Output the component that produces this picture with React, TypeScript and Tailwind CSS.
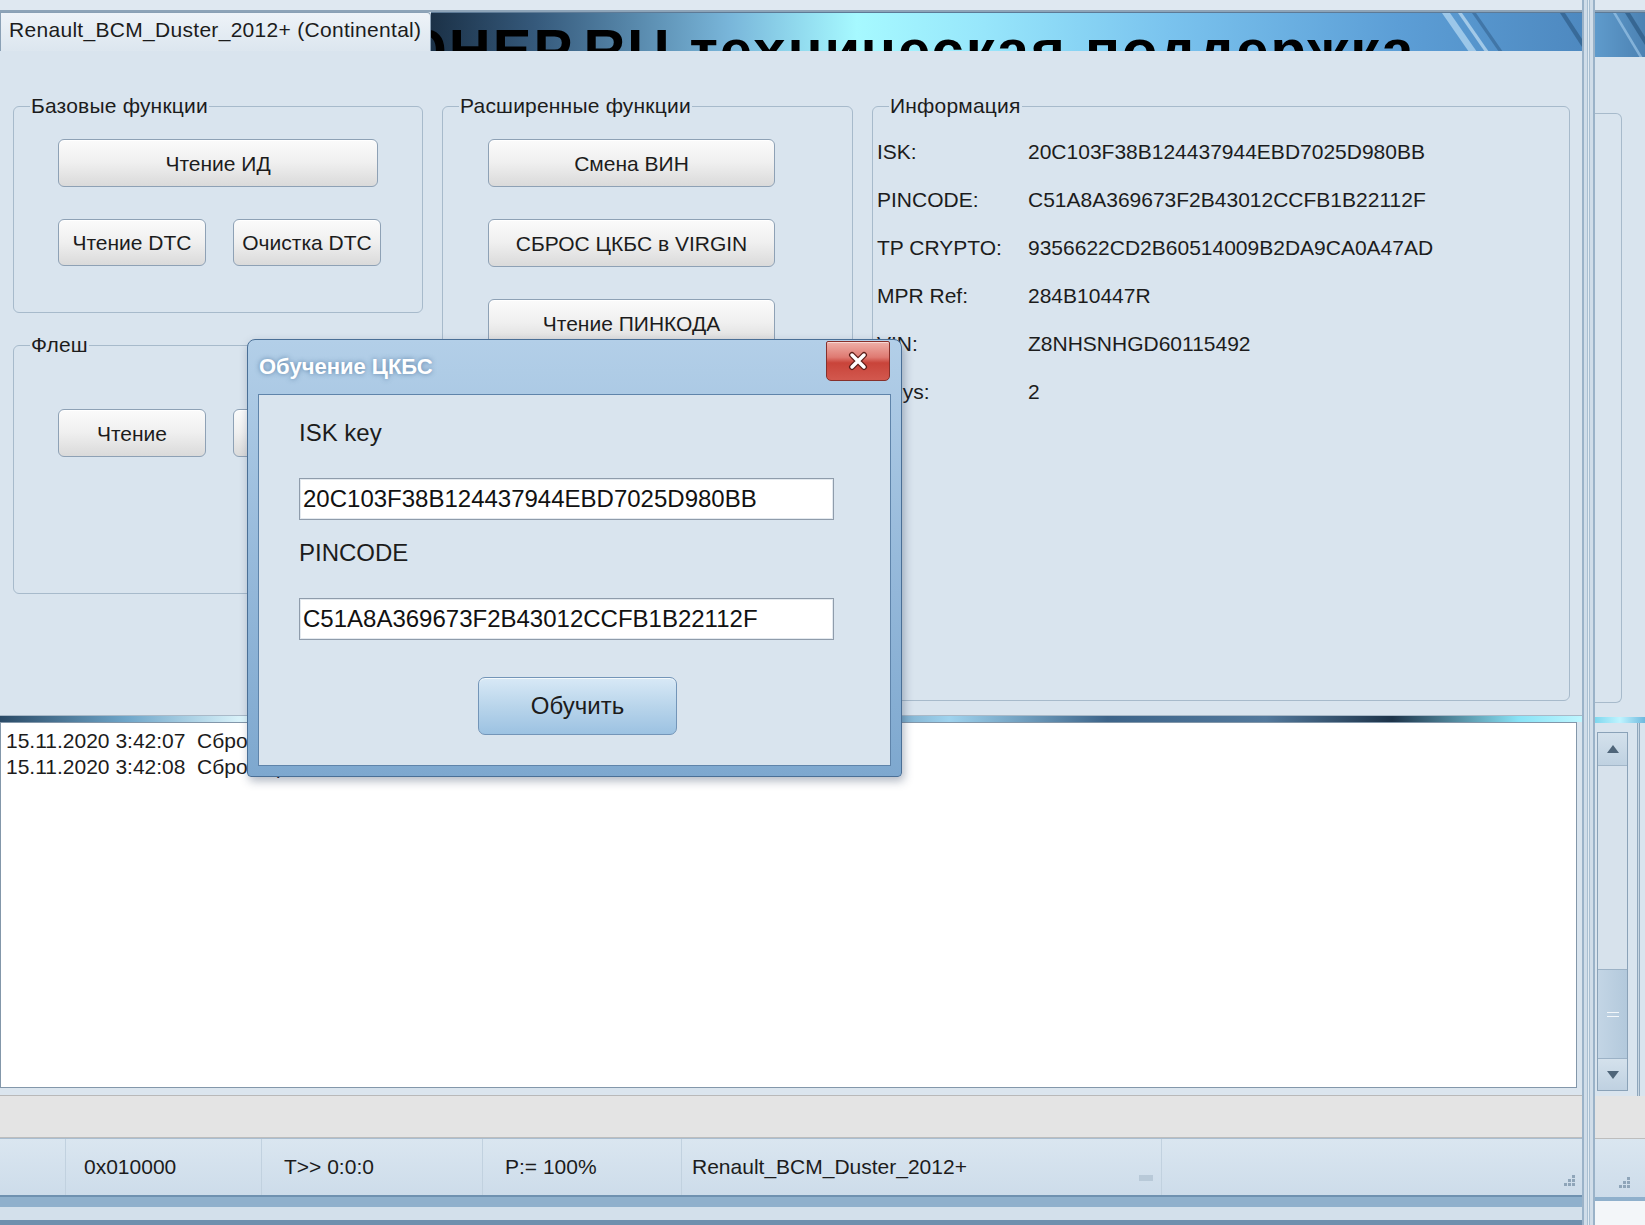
import React from 'react';

const INFO: [string, string][] = [
  ['ISK:', '20C103F38B124437944EBD7025D980BB'],
  ['PINCODE:', 'C51A8A369673F2B43012CCFB1B22112F'],
  ['TP CRYPTO:', '9356622CD2B60514009B2DA9CA0A47AD'],
  ['MPR Ref:', '284B10447R'],
  ['VIN:', 'Z8NHSNHGD60115492'],
  ['Keys:', '2'],
];

const LOG = ['15.11.2020 3:42:07  Сброс ЦКБС в VIRGIN', '15.11.2020 3:42:08  Сброс ЦКБС выполнен'];

function WinButton({ className = '', children }: { className?: string; children?: React.ReactNode }) {
  return (
    <button
      type="button"
      className={`flex shrink-0 items-center justify-center rounded-[6px] border border-[#8ea1b5] bg-linear-to-b from-[#fbfbfb] via-[#efefef] to-[#dadada] text-[21px] leading-none text-[#1c1c1c] shadow-[inset_0_1px_0_#ffffff] ${className}`}
    >
      {children}
    </button>
  );
}

function Group({ title, className = '', children }: { title: string; className?: string; children: React.ReactNode }) {
  return (
    <fieldset className={`min-w-0 shrink-0 rounded-[6px] border border-[#a7bacb] ${className}`}>
      <legend className="ml-[16px] px-px text-[21px] leading-[24px] tracking-[0.2px] text-[#1c1c1c]">{title}</legend>
      {children}
    </fieldset>
  );
}

function Grip() {
  return (
    <svg width="12" height="12" viewBox="0 0 12 12">
      {[
        [8, 0],
        [4, 4],
        [8, 4],
        [0, 8],
        [4, 8],
        [8, 8],
      ].map(([x, y]) => (
        <rect key={`${x}-${y}`} x={x} y={y} width="3" height="3" fill="#8fa5b9" />
      ))}
    </svg>
  );
}

function Banner() {
  return (
    <div className="relative h-[39px] flex-1 overflow-hidden border-t border-[#5d7a96] bg-[linear-gradient(90deg,#1b3147_0%,#35597b_9%,#79b6da_26%,#a6f9ff_37%,#97e6fb_48%,#7ac3ee_64%,#5c9ed6_84%,#4e89c0_100%)]">
      <div className="ml-[-44px] mt-[8px] whitespace-nowrap text-[58px] font-bold leading-[58px] tracking-[2px] text-black">
        ЮНЕР.RU техническая поддержка
      </div>
      {/* diagonal light stripes near the right end */}
      <svg className="absolute right-0 top-0" width="150" height="39" viewBox="0 0 150 39">
        <polygon points="10,0 18,0 45,39 37,39" fill="#b9dcf3" opacity="0.7" />
        <polygon points="26,0 30,0 57,39 53,39" fill="#d6ecfa" opacity="0.6" />
        <polygon points="40,0 44,0 71,39 67,39" fill="#34628f" opacity="0.6" />
        <polygon points="128,0 133,0 150,26 150,34" fill="#2f5d88" opacity="0.7" />
      </svg>
    </div>
  );
}

function Dialog() {
  return (
    <div className="absolute left-[247px] top-[339px] flex h-[438px] w-[655px] flex-col rounded-t-[8px] rounded-b-[4px] border border-[#4a6f96] bg-linear-to-b from-[#b3cfe8] via-[#97badb] to-[#7ea8cf] px-[10px] pb-[10px] shadow-[2px_4px_10px_rgba(30,50,80,0.35)]">
      <div className="flex h-[54px] shrink-0 items-start justify-between">
        <span className="ml-px mt-[14px] text-[22px] font-bold leading-[26px] text-white [text-shadow:0_0_5px_rgba(70,110,150,0.8)]">
          Обучение ЦКБС
        </span>
        <div className="mr-px mt-px flex h-[40px] w-[64px] items-center justify-center rounded-b-[5px] rounded-t-[2px] border border-[#86302b] bg-[linear-gradient(180deg,#eeb0a8_0%,#df7a72_40%,#c9443a_55%,#d2584e_100%)] shadow-[inset_0_1px_0_rgba(255,255,255,0.5)]">
          <svg width="24" height="20" viewBox="0 0 24 20">
            <path d="M6 4 L18 16 M18 4 L6 16" stroke="#5c1d18" strokeWidth="6" strokeLinecap="round" />
            <path d="M6 4 L18 16 M18 4 L6 16" stroke="#ffffff" strokeWidth="3.5" strokeLinecap="round" />
          </svg>
        </div>
      </div>
      <div className="flex flex-1 flex-col border border-[#5f84aa] bg-[#d9e4ee] pl-[40px] text-[24px] text-[#1c1c1c]">
        <div className="mt-[24px] leading-[28px]">ISK key</div>
        <input
          readOnly
          value="20C103F38B124437944EBD7025D980BB"
          className="mt-[31px] h-[42px] w-[535px] border border-[#8f9cab] bg-white px-[3px] text-[24px] text-[#111] outline-none shadow-[inset_0_0_0_1px_#e3e9ef]"
        />
        <div className="mt-[19px] leading-[28px]">PINCODE</div>
        <input
          readOnly
          value="C51A8A369673F2B43012CCFB1B22112F"
          className="mt-[31px] h-[42px] w-[535px] border border-[#8f9cab] bg-white px-[3px] text-[24px] text-[#111] outline-none shadow-[inset_0_0_0_1px_#e3e9ef]"
        />
        <button
          type="button"
          className="ml-[179px] mt-[37px] h-[58px] w-[199px] rounded-[7px] border border-[#7395b8] bg-linear-to-b from-[#d8e9f6] via-[#b9d5eb] to-[#9cc2e2] text-[24px] text-[#1c1c1c] shadow-[inset_0_1px_0_rgba(255,255,255,0.7)]"
        >
          Обучить
        </button>
      </div>
    </div>
  );
}

function SideWindow() {
  return (
    <div className="flex w-[50px] flex-col">
      <div className="h-[12px] shrink-0 border-b-2 border-[#8ea4b8] bg-[#dfe8f1]" />
      <div className="relative h-[45px] shrink-0 overflow-hidden border-t border-[#5d7a96] bg-[linear-gradient(90deg,#5f9bcc,#4c82b3)]">
        <svg className="absolute left-0 top-0" width="50" height="45" viewBox="0 0 50 45">
          <polygon points="30,0 35,0 50,24 50,32" fill="#2c5882" opacity="0.7" />
          <polygon points="18,0 21,0 48,45 45,45" fill="#a7cfee" opacity="0.6" />
        </svg>
      </div>
      <div className="h-[660px] shrink-0 bg-[#d9e4ee] pt-[56px]">
        <div className="h-[590px] w-[27px] rounded-r-[6px] border-y border-r border-[#a7bacb]" />
      </div>
      <div className="h-[6px] shrink-0 bg-[linear-gradient(90deg,#7fd7ee,#bff4ff,#6fb9de)]" />
      <div className="flex h-[373px] shrink-0 bg-[#d9e4ee]">
        <div className="w-[2px]" />
        <div className="mt-[9px] flex h-[359px] w-[31px] flex-col border border-[#8aa2b8] bg-[#d7e2ec]">
          <div className="flex h-[33px] items-center justify-center border-b border-[#a3b7c9] bg-linear-to-b from-[#d4e1ec] to-[#bfd1e1]">
            <svg width="12" height="8" viewBox="0 0 12 8">
              <polygon points="6,0 12,8 0,8" fill="#4f6579" />
            </svg>
          </div>
          <div className="h-[203px]" />
          <div className="flex h-[90px] items-center justify-center border-y border-[#9cb2c6] bg-linear-to-r from-[#c3d5e5] to-[#b3c9dc]">
            <div className="flex w-[12px] flex-col gap-[3px]">
              <div className="h-px bg-[#f3f7fa]" />
              <div className="h-px bg-[#f3f7fa]" />
            </div>
          </div>
          <div className="flex flex-1 items-center justify-center bg-linear-to-b from-[#d4e1ec] to-[#bfd1e1]">
            <svg width="12" height="8" viewBox="0 0 12 8">
              <polygon points="0,0 12,0 6,8" fill="#4f6579" />
            </svg>
          </div>
        </div>
        <div className="ml-[9px] w-[3px] border-x border-[#8fa6bb] bg-[#c8d7e4]" />
      </div>
      <div className="h-[43px] shrink-0 border-b border-[#bdbdbd] bg-[#e4e4e4]" />
      <div className="flex h-[62px] shrink-0 items-end justify-end border-b-[4px] border-[#8fb0cc] bg-linear-to-b from-[#dae6f0] to-[#cddcea] pb-[8px] pr-[14px]">
        <Grip />
      </div>
      <div className="flex-1 bg-[#f3f6f9]" />
    </div>
  );
}

export default function App() {
  return (
    <div className="relative flex h-[1225px] w-[1645px] overflow-hidden bg-[#d9e4ee] font-['Liberation_Sans',Arial,sans-serif] text-[#1c1c1c]">
      <div className="flex w-[1595px] shrink-0">
        <div className="flex w-[1582px] shrink-0 flex-col">
          <div className="h-[12px] shrink-0 border-b-2 border-[#8ea4b8] bg-[#dfe8f1]" />
          {/* tab strip with the header picture */}
          <div className="flex h-[39px] shrink-0">
            <div className="w-[431px] shrink-0 rounded-tr-[4px] border-l border-r border-t border-[#8aa0b5] bg-linear-to-b from-[#eef3f8] to-[#dce6ef] pl-[8px] pt-[4px] text-[21px] leading-[26px] tracking-[0.3px]">
              Renault_BCM_Duster_2012+ (Continental)
            </div>
            <Banner />
          </div>

          <div className="flex h-[664px] shrink-0 gap-[19px] pl-[13px] pt-[43px]">
            <div className="flex w-[410px] shrink-0 flex-col gap-[20px]">
              <Group title="Базовые функции" className="h-[219px]">
                <div className="flex flex-col gap-[32px] pl-[44px] pt-[21px]">
                  <WinButton className="h-[48px] w-[320px]">Чтение ИД</WinButton>
                  <div className="flex gap-[27px]">
                    <WinButton className="h-[47px] w-[148px]">Чтение DTC</WinButton>
                    <WinButton className="h-[47px] w-[148px]">Очистка DTC</WinButton>
                  </div>
                </div>
              </Group>
              <Group title="Флеш" className="h-[261px]">
                <div className="flex gap-[27px] pl-[44px] pt-[52px]">
                  <WinButton className="h-[48px] w-[148px]">Чтение</WinButton>
                  <WinButton className="h-[48px] w-[148px]" />
                </div>
              </Group>
            </div>

            <Group title="Расширенные функции" className="h-[500px] w-[411px]">
              <div className="flex flex-col gap-[32px] pl-[45px] pt-[21px]">
                <WinButton className="h-[48px] w-[287px]">Смена ВИН</WinButton>
                <WinButton className="h-[48px] w-[287px]">СБРОС ЦКБС в VIRGIN</WinButton>
                <WinButton className="h-[48px] w-[287px]">Чтение ПИНКОДА</WinButton>
                <WinButton className="h-[48px] w-[287px]" />
              </div>
            </Group>

            <Group title="Информация" className="h-[607px] w-[698px]">
              <div className="flex flex-col pt-[10px] text-[21px]">
                {INFO.map(([label, value]) => (
                  <div key={label} className="flex h-[48px] items-center">
                    <span className="w-[155px] shrink-0 pl-[4px]">{label}</span>
                    <span>{value}</span>
                  </div>
                ))}
              </div>
            </Group>
          </div>

          <div className="h-px shrink-0 bg-[#a9b9c8]" />
          <div className="h-[6px] shrink-0 bg-[linear-gradient(90deg,#2a4a66_0%,#6fa6c9_8%,#e6fbff_16%,#ffffff_30%,#a3dcf0_34%,#3f6b90_40%,#8fc4e6_45%,#4f789c_52%,#9fd3ee_60%,#3d6489_70%,#53799c_80%,#1d3349_88%,#89e3f6_96%,#bff6ff_100%)]" />
          <div className="h-[366px] w-[1577px] shrink-0 border border-[#8397aa] bg-white pl-[5px] pt-[5px] text-[21px] leading-[26px]">
            {LOG.map((line) => (
              <div key={line} className="whitespace-pre">
                {line}
              </div>
            ))}
          </div>
          <div className="h-[8px] shrink-0 border-b border-[#b9b9b9] bg-[#dbe5ee]" />
          <div className="h-[42px] shrink-0 border-b border-[#bdbdbd] bg-[#e4e4e4]" />

          <div className="flex h-[57px] shrink-0 border-t border-[#a9bdd0] bg-linear-to-b from-[#dae6f0] to-[#cddcea] text-[21px]">
            <div className="w-[66px] border-r border-[#c1d1df]" />
            <div className="flex w-[196px] items-center border-r border-[#c1d1df] pl-[18px]">0x010000</div>
            <div className="flex w-[221px] items-center border-r border-[#c1d1df] pl-[22px]">T&gt;&gt; 0:0:0</div>
            <div className="flex w-[199px] items-center border-r border-[#c1d1df] pl-[22px]">P:= 100%</div>
            <div className="flex w-[480px] items-center justify-between border-r border-[#c1d1df] pl-[10px] pr-[8px]">
              <span>Renault_BCM_Duster_2012+</span>
              <span className="mt-[22px] h-[6px] w-[14px] bg-[#b8c9d8]" />
            </div>
            <div className="flex flex-1 items-end justify-end pb-[8px] pr-[6px]">
              <Grip />
            </div>
          </div>

          <div className="h-[12px] shrink-0 border-t-2 border-[#6f91b0] bg-[#8fb0cc]" />
          <div className="h-[13px] shrink-0 bg-[#d3e0eb]" />
          <div className="flex-1 bg-[#6f90ae]" />
        </div>
        {/* window frame edge */}
        <div className="w-[13px] shrink-0 border-x-2 border-[#9ab2c8] bg-[#d0dde9] px-[3px]">
          <div className="h-full w-[3px] border-x border-[#a9bfd2] bg-[#e3ecf3]" />
        </div>
      </div>

      <SideWindow />
      <Dialog />
    </div>
  );
}
